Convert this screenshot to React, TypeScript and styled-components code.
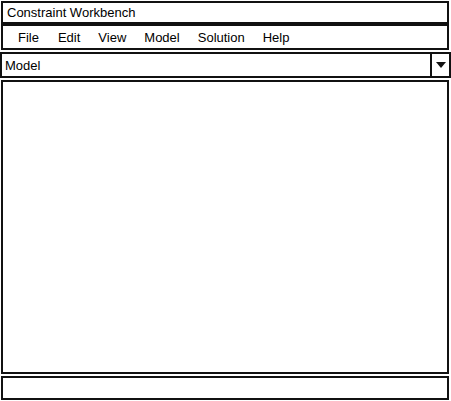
import React from "react";
import styled, { createGlobalStyle } from "styled-components";

const GlobalStyle = createGlobalStyle`
  html, body {
    margin: 0;
    padding: 0;
    background: #ffffff;
  }
  body {
    font-family: "Liberation Sans", Arial, sans-serif;
    color: #000;
  }
`;

const Frame = styled.div`
  width: 451px;
  height: 401px;
  display: flex;
  flex-direction: column;
  box-sizing: border-box;
  padding: 1px 0 1px 0;
`;

const Bar = styled.div<{ $height: number }>`
  box-sizing: border-box;
  height: ${({ $height }) => $height}px;
  margin: 0 2px 0 1px;
  border: 2px solid #111;
  background: #fff;
  display: flex;
  align-items: center;
  font-size: 13px;
`;

const TitleText = styled.span`
  padding-left: 4px;
`;

const MenuBar = styled(Bar)`
  margin-top: 0;
  padding-left: 6px;
`;

const MenuItem = styled.span`
  padding: 0 9px;
  &:nth-child(2) { padding-left: 10px; }
`;

const Combo = styled.div`
  box-sizing: border-box;
  height: 26px;
  margin-top: 2px;
  border: 2px solid #111;
  display: flex;
  align-items: stretch;
  font-size: 13px;
`;

const ComboText = styled.div`
  flex: 1;
  display: flex;
  align-items: center;
  padding-left: 3px;
`;

const ComboButton = styled.div`
  width: 17px;
  border-left: 2px solid #111;
  display: flex;
  align-items: center;
  justify-content: center;
`;

const Panel = styled.div`
  flex: 1;
  box-sizing: border-box;
  margin: 2px 2px 0 1px;
  border: 2px solid #111;
  background: #fff;
`;

const StatusBar = styled(Bar)`
  margin-top: 2px;
`;

const menus = ["File", "Edit", "View", "Model", "Solution", "Help"];

export default function App() {
  return (
    <>
      <GlobalStyle />
      <Frame>
        <Bar $height={23}>
          <TitleText>Constraint Workbench</TitleText>
        </Bar>
        <MenuBar $height={26}>
          {menus.map((m) => (
            <MenuItem key={m}>{m}</MenuItem>
          ))}
        </MenuBar>
        <Combo>
          <ComboText>Model</ComboText>
          <ComboButton>
            <svg width="10" height="6" viewBox="0 0 10 6">
              <path d="M0 0 L10 0 L5 6 Z" fill="#111" />
            </svg>
          </ComboButton>
        </Combo>
        <Panel />
        <StatusBar $height={24} />
      </Frame>
    </>
  );
}
